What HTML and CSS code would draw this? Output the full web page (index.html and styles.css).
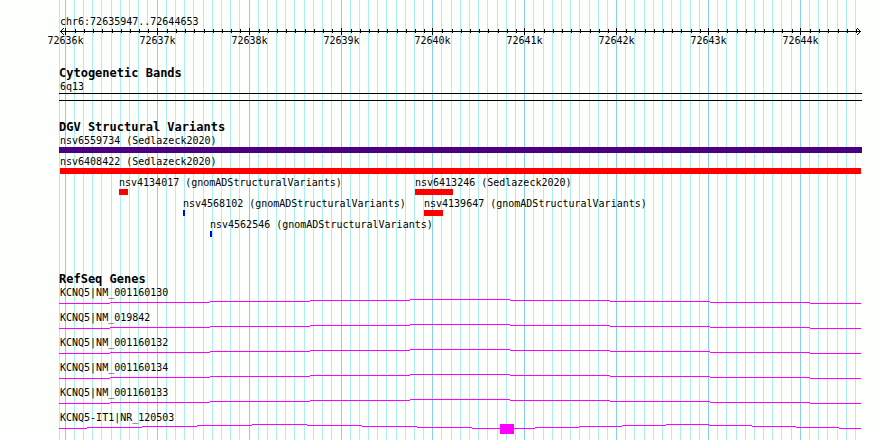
FILE: index.html
```html
<!DOCTYPE html>
<html lang="en">
<head>
<meta charset="utf-8">
<title>chr6:72635947..72644653</title>
<link rel="stylesheet" href="styles.css">
</head>
<body>
<main class="panel">
  <svg class="grid" viewBox="0 0 803 440" preserveAspectRatio="none" aria-hidden="true">
    <defs>
      <path id="minor" transform="translate(.5 0)" d="M0 0V440M15 0V440M24 0V440M33 0V440M42 0V440M52 0V440M61 0V440M70 0V440M79 0V440M88 0V440M107 0V440M116 0V440M125 0V440M134 0V440M144 0V440M153 0V440M162 0V440M171 0V440M180 0V440M199 0V440M208 0V440M217 0V440M226 0V440M235 0V440M245 0V440M254 0V440M263 0V440M272 0V440M291 0V440M300 0V440M309 0V440M318 0V440M327 0V440M337 0V440M346 0V440M355 0V440M364 0V440M382 0V440M392 0V440M401 0V440M410 0V440M419 0V440M428 0V440M438 0V440M447 0V440M456 0V440M474 0V440M484 0V440M493 0V440M502 0V440M511 0V440M520 0V440M530 0V440M539 0V440M548 0V440M566 0V440M575 0V440M585 0V440M594 0V440M603 0V440M612 0V440M621 0V440M631 0V440M640 0V440M658 0V440M667 0V440M677 0V440M686 0V440M695 0V440M704 0V440M713 0V440M722 0V440M732 0V440M750 0V440M759 0V440M768 0V440M778 0V440M787 0V440M796 0V440"/>
      <path id="major" transform="translate(.5 0)" d="M6 0V440M98 0V440M190 0V440M282 0V440M373 0V440M465 0V440M557 0V440M649 0V440M741 0V440"/>
      <path id="intron" transform="translate(0 .5)" d="M0 4H51M51 3H151M151 2H251M251 1H351M351 0H451M451 1H551M551 2H651M651 3H751M751 4H802"/>
    </defs>
    <use class="grid-minor" href="#minor"/>
    <use class="grid-major" href="#major"/>
  </svg>

  <header class="ruler">
    <p class="label">chr6:72635947..72644653</p>
    <svg class="scale" viewBox="0 0 803 7" preserveAspectRatio="none" aria-hidden="true">
      <svg x="2" y="1" width="801" height="4" viewBox="2 0 801 4"><use href="#minor"/></svg>
      <use href="#major"/>
      <path d="M1 3.5H802"/>
      <path class="arrow" d="M1 3h1v1h-1zM2 2h1v1h-1zM2 4h1v1h-1zM3 1h1v1h-1zM3 5h1v1h-1zM4 0h1v1h-1zM4 6h1v1h-1zM801 3h1v1h-1zM800 2h1v1h-1zM800 4h1v1h-1zM799 1h1v1h-1zM799 5h1v1h-1zM798 0h1v1h-1zM798 6h1v1h-1z"/>
    </svg>
    <div class="ticks">
      <span style="left:0.809%">72636k</span>
      <span style="left:12.267%">72637k</span>
      <span style="left:23.724%">72638k</span>
      <span style="left:35.181%">72639k</span>
      <span style="left:46.513%">72640k</span>
      <span style="left:57.970%">72641k</span>
      <span style="left:69.427%">72642k</span>
      <span style="left:80.884%">72643k</span>
      <span style="left:92.341%">72644k</span>
    </div>
  </header>

  <section class="track">
    <h2>Cytogenetic Bands</h2>
    <p class="label">6q13</p>
    <div class="band"></div>
  </section>

  <section class="track">
    <h2>DGV Structural Variants</h2>
    <div class="row"><p class="label">nsv6559734 (Sedlazeck2020)</p><div class="bar complex"></div></div>
    <div class="row"><p class="label">nsv6408422 (Sedlazeck2020)</p><div class="bar loss inset"></div></div>
    <div class="row">
      <div class="feature" style="left:7.472%"><p>nsv4134017 (gnomADStructuralVariants)</p><div class="bar loss" style="width:1.213%"></div></div>
      <div class="feature" style="left:44.334%"><p>nsv6413246 (Sedlazeck2020)</p><div class="bar loss" style="width:8.501%"></div></div>
    </div>
    <div class="row">
      <div class="feature" style="left:15.442%"><p>nsv4568102 (gnomADStructuralVariants)</p><div class="bar gain" style="width:0.295%"></div></div>
      <div class="feature" style="left:45.455%"><p>nsv4139647 (gnomADStructuralVariants)</p><div class="bar loss" style="width:4.338%"></div></div>
    </div>
    <div class="row">
      <div class="feature" style="left:18.804%"><p>nsv4562546 (gnomADStructuralVariants)</p><div class="bar gain" style="width:0.307%"></div></div>
    </div>
  </section>

  <section class="track genes">
    <h2>RefSeq Genes</h2>
    <p class="label">KCNQ5|NM_001160130</p>
    <svg class="gene" viewBox="0 0 803 12" preserveAspectRatio="none"><use href="#intron"/></svg>
    <p class="label">KCNQ5|NM_019842</p>
    <svg class="gene" viewBox="0 0 803 12" preserveAspectRatio="none"><use href="#intron"/></svg>
    <p class="label">KCNQ5|NM_001160132</p>
    <svg class="gene" viewBox="0 0 803 12" preserveAspectRatio="none"><use href="#intron"/></svg>
    <p class="label">KCNQ5|NM_001160134</p>
    <svg class="gene" viewBox="0 0 803 12" preserveAspectRatio="none"><use href="#intron"/></svg>
    <p class="label">KCNQ5|NM_001160133</p>
    <svg class="gene" viewBox="0 0 803 12" preserveAspectRatio="none"><use href="#intron"/></svg>
    <p class="label">KCNQ5-IT1|NR_120503</p>
    <svg class="gene" viewBox="0 0 803 12" preserveAspectRatio="none">
      <path transform="translate(0 .5)" d="M0 4H28M28 3H83M83 2H138M138 1H193M193 0H248M248 1H303M303 2H358M358 3H413M413 4H476M476 3H520M520 2H563M563 1H607M607 0H650M650 1H693M693 2H737M737 3H780M780 4H802"/>
      <rect class="exon" x="441" y="0" width="14" height="10"/>
    </svg>
  </section>
</main>
</body>
</html>
```
FILE: styles.css
```css
* {
  box-sizing: border-box;
}

body {
  margin: 0;
  background: #fdfffc;
  color: #000;
  font: 10px/13px "DejaVu Sans Mono", "Liberation Mono", monospace;
}

p,
h2 {
  margin: 0;
  white-space: nowrap;
}

h2 {
  font-size: 12px;
  line-height: 14px;
}

svg {
  display: block;
  width: 100%;
  shape-rendering: crispEdges;
}

.panel {
  position: relative;
  min-height: 100vh;
  margin: 0 28px 0 59px;
  padding-top: 14px;
}

.grid {
  position: absolute;
  inset: 0;
  z-index: -1;
  height: 100%;
}

.grid-minor {
  stroke: #afeeee;
}

.grid-major {
  stroke: #87ceeb;
}

.label {
  padding-left: 1px;
}

.ruler {
  padding-top: 1px;
}

.scale {
  height: 7px;
  stroke: #000;
}

.arrow {
  fill: #000;
  stroke: none;
}

.ticks {
  position: relative;
  height: 12px;
}

.ticks span {
  position: absolute;
  line-height: 12px;
  transform: translateX(-50%);
}

.track {
  margin-top: 19px;
}

.genes {
  margin-top: 33px;
}

.band {
  height: 8px;
  border: solid #000;
  border-width: 1px 0;
}

.row {
  position: relative;
  height: 21px;
}

.feature {
  position: absolute;
  right: 0;
}

.bar {
  height: 6px;
}

.inset {
  margin: 0 1px;
}

.complex {
  background: #4b0082;
}

.loss {
  background: #f00;
}

.gain {
  background: #00f;
}

.gene {
  height: 12px;
  stroke: #f0f;
}

.exon {
  fill: #f0f;
  stroke: none;
}
```
